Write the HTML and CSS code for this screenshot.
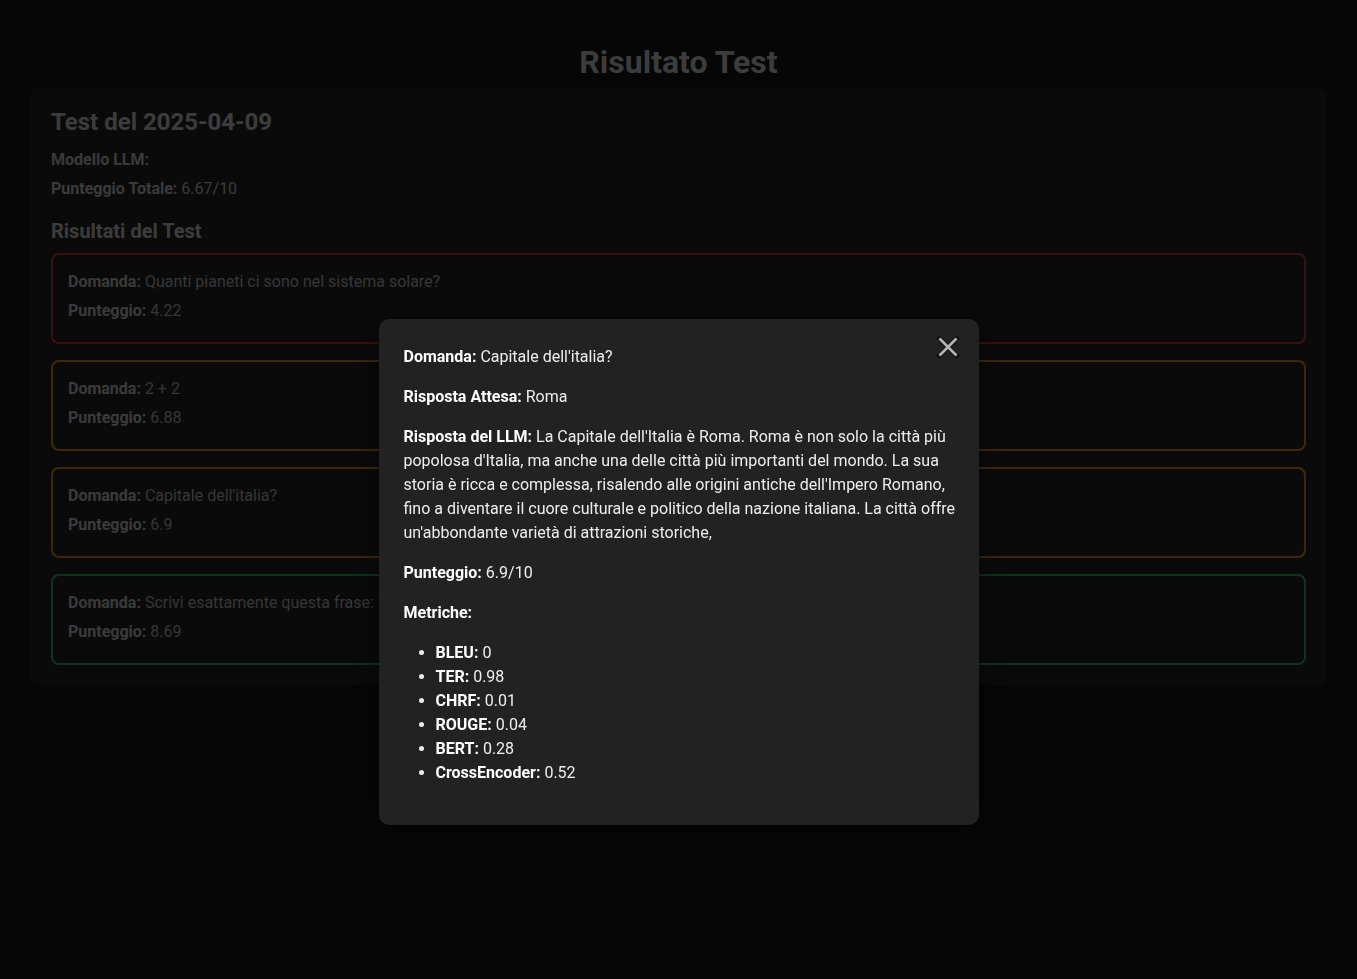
FILE: index.html
```html
<!DOCTYPE html>
<html lang="it">
<head>
<meta charset="utf-8">
<title>Risultato Test</title>
<link rel="stylesheet" href="styles.css">
</head>
<body>
<h1 class="page-title">Risultato Test</h1>
<main class="panel">
  <h2 class="test-title">Test del 2025-04-09</h2>
  <p class="info"><b>Modello LLM:</b></p>
  <p class="info"><b>Punteggio Totale:</b> 6.67/10</p>
  <h3 class="section-title">Risultati del Test</h3>
  <div class="results">
    <div class="card card-red">
      <p><b>Domanda:</b> Quanti pianeti ci sono nel sistema solare?</p>
      <p><b>Punteggio:</b> 4.22</p>
    </div>
    <div class="card card-orange">
      <p><b>Domanda:</b> 2 + 2</p>
      <p><b>Punteggio:</b> 6.88</p>
    </div>
    <div class="card card-orange">
      <p><b>Domanda:</b> Capitale dell'italia?</p>
      <p><b>Punteggio:</b> 6.9</p>
    </div>
    <div class="card card-green">
      <p><b>Domanda:</b> Scrivi esattamente questa frase: "Il sole sorge a est e tramonta a ovest."</p>
      <p><b>Punteggio:</b> 8.69</p>
    </div>
  </div>
</main>

<div class="overlay">
  <div class="modal">
    <button class="close" aria-label="Chiudi">
      <svg width="24" height="24" viewBox="0 0 24 24">
        <path d="M3.5 3.5 L20.5 20.5 M20.5 3.5 L3.5 20.5" stroke="#141414" stroke-width="5" stroke-linecap="square" fill="none"/>
        <path d="M3.5 3.5 L20.5 20.5 M20.5 3.5 L3.5 20.5" stroke="#b4b4b4" stroke-width="2.6" stroke-linecap="butt" fill="none"/>
      </svg>
    </button>
    <p><b>Domanda:</b> Capitale dell'italia?</p>
    <p><b>Risposta Attesa:</b> Roma</p>
    <p><b>Risposta del LLM:</b> La Capitale dell'Italia è Roma. Roma è non solo la città più popolosa d'Italia, ma anche una delle città più importanti del mondo. La sua storia è ricca e complessa, risalendo alle origini antiche dell'Impero Romano, fino a diventare il cuore culturale e politico della nazione italiana. La città offre un'abbondante varietà di attrazioni storiche,</p>
    <p><b>Punteggio:</b> 6.9/10</p>
    <p><b>Metriche:</b></p>
    <ul class="metrics">
      <li><b>BLEU:</b> 0</li>
      <li><b>TER:</b> 0.98</li>
      <li><b>CHRF:</b> 0.01</li>
      <li><b>ROUGE:</b> 0.04</li>
      <li><b>BERT:</b> 0.28</li>
      <li><b>CrossEncoder:</b> 0.52</li>
    </ul>
  </div>
</div>
</body>
</html>
```
FILE: styles.css
```css
html, body {
  margin: 0;
  height: 100%;
}
body {
  background: #141414;
  color: #c2c2c2;
  font-family: Roboto, "Noto Sans", sans-serif;
  font-size: 16px;
  padding: 42px 30px 0;
  box-sizing: border-box;
}
b { font-weight: 700; }

.page-title {
  margin: 0 0 6px;
  text-align: center;
  font-size: 32px;
  line-height: 40px;
  font-weight: 700;
  color: #c8c8c8;
}

.panel {
  background: #242424;
  border-radius: 8px;
  padding: 20px 21px;
}
.test-title {
  margin: 0 0 12px;
  font-size: 24px;
  line-height: 29px;
  color: #cacaca;
}
.info {
  margin: 0 0 8px;
  line-height: 21px;
}
.section-title {
  margin: 20px 0 10px;
  font-size: 20px;
  line-height: 24px;
  color: #cacaca;
}
.results {
  display: flex;
  flex-direction: column;
  gap: 16px;
}
.card {
  border: 2px solid #c83a3a;
  border-radius: 8px;
  background: #222;
  padding: 12px 15px 17px;
}
.card p {
  margin: 0;
  line-height: 29px;
  color: #b4b4b4;
  white-space: nowrap;
  overflow: hidden;
}
.card p b { color: #c4c4c4; }
.card-red { border-color: #c03a3a; }
.card-orange { border-color: #d08812; }
.card-green { border-color: #30aa68; }

.overlay {
  position: fixed;
  inset: 0;
  background: rgba(0, 0, 0, 0.7);
  display: flex;
  justify-content: center;
  align-items: flex-start;
  padding-top: 319px;
}
.modal {
  position: relative;
  width: 600px;
  box-sizing: border-box;
  background: #222;
  color: #eeeeee;
  border-radius: 10px;
  padding: 25px 20px 25px 25px;
  box-shadow: 0 0 30px rgba(0, 0, 0, 0.5);
}
.modal p {
  margin: 0 0 16px;
  line-height: 24px;
}
.modal p:first-of-type { margin-top: 1px; }
.modal b { color: #fff; }
.metrics {
  margin: 16px 0 15px;
  padding-left: 32px;
}
.metrics li {
  line-height: 24px;
}
.close {
  position: absolute;
  top: 16px;
  right: 19px;
  width: 24px;
  height: 24px;
  padding: 0;
  border: 0;
  background: none;
  cursor: pointer;
}
.close svg { display: block; }
```
